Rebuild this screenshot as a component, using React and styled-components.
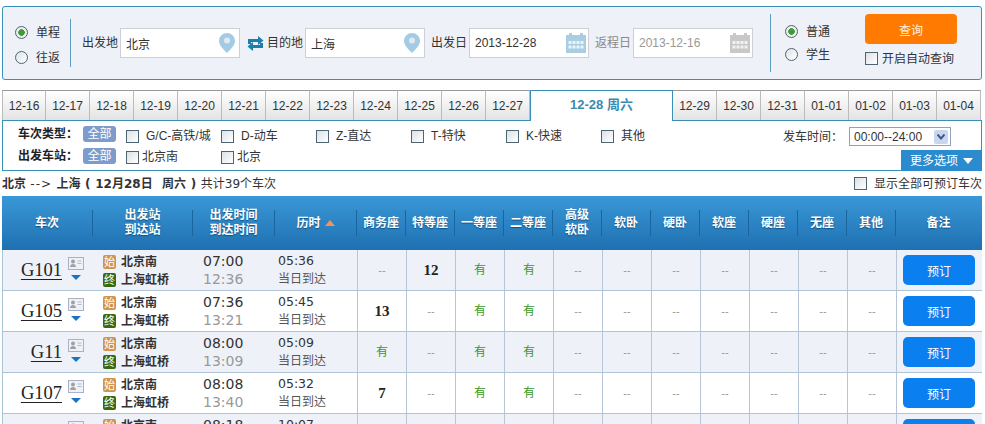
import React from "react";
import styled, { createGlobalStyle } from "styled-components";

const SANS = '"Liberation Sans", "Noto Sans CJK SC", sans-serif';
const COLS = "91px 100px 82px 82px repeat(11, 49px) 86px";

const GlobalStyle = createGlobalStyle`
  html, body {
    margin: 0;
    height: 424px;
    overflow: hidden;
    background: #fff;
  }
  body {
    font: 12px/16px ${SANS};
    color: #333;
  }
`;

const Page = styled.div`
  width: 980px;
  margin-left: 2px;
  padding-top: 6px;
`;

//Search panel
const SearchPanel = styled.form`
  display: flex;
  align-items: center;
  box-sizing: border-box;
  height: 74px;
  margin: 0;
  border: 1px solid #3a8fb7;
  border-radius: 3px;
  background: #eef1f8;
`;

const TripRadios = styled.div`
  display: flex;
  flex-direction: column;
  justify-content: center;
  gap: 9px;
  box-sizing: border-box;
  width: 68px;
  height: 48px;
  padding: 4px 0 0 12px;
  border-right: 1px solid #5b9fc0;
`;

const ClassRadios = styled.div`
  display: flex;
  flex-direction: column;
  justify-content: center;
  gap: 7px;
  box-sizing: border-box;
  width: 95px;
  height: 58px;
  margin-left: 17px;
  padding-left: 14px;
  border-left: 1px solid #5b9fc0;
`;

const RadioLabel = styled.label`
  display: flex;
  align-items: center;
  gap: 8px;
  height: 16px;
`;

const Radio = styled.input.attrs({ type: "radio" })`
  appearance: none;
  box-sizing: border-box;
  width: 13px;
  height: 13px;
  margin: 0;
  border: 1px solid #4d6473;
  border-radius: 50%;
  background: linear-gradient(135deg, #dfe3e8, #fff);
  &:checked {
    background: radial-gradient(circle, #3f9a3a 0 3px, #e8f0e8 3.5px);
  }
`;

const Fields = styled.div`
  display: flex;
  align-items: center;
  gap: 6px;
  margin-left: 11px;
`;

const FieldLabel = styled.label`
  display: flex;
  align-items: center;
  color: ${(p) => (p.$muted ? "#888" : "#333")};
`;

const LabelText = styled.span`
  width: 38px;
  white-space: nowrap;
`;

const InputBox = styled.span`
  position: relative;
  display: block;
  width: 120px;
  height: 30px;
`;

const TextInput = styled.input`
  display: block;
  box-sizing: border-box;
  width: 100%;
  height: 100%;
  padding: 0 5px;
  border: 1px solid #ccd0d6;
  outline: 0;
  background: #fff;
  font: 12px ${SANS};
  color: ${(p) => (p.$muted ? "#999" : "#333")};
`;

const FieldIcon = styled.span`
  position: absolute;
  top: 5px;
  right: ${(p) => p.$right}px;
  line-height: 0;
`;

const SwapIcon = styled.svg`
  display: block;
  flex: none;
  margin: 1px -3px 0 1px;
`;

const SearchColumn = styled.div`
  display: flex;
  flex-direction: column;
  align-self: flex-start;
  gap: 8px;
  margin: 7px 0 0 0;
`;

const SearchButton = styled.button`
  width: 92px;
  height: 30px;
  padding: 0;
  border: 0;
  border-radius: 4px;
  background: #ff7a00;
  font: 12px ${SANS};
  color: #fff3dd;
`;

const CheckLabel = styled.label`
  display: flex;
  align-items: center;
  gap: ${(p) => p.$gap || 4}px;
  height: 13px;
  white-space: nowrap;
  color: #333;
`;

const Check = styled.input.attrs({ type: "checkbox" })`
  appearance: none;
  flex: none;
  box-sizing: border-box;
  width: 13px;
  height: 13px;
  margin: 0;
  border: 1px solid #4d6473;
  background: linear-gradient(135deg, #dce1e6, #fff);
`;

//Date tabs
const Tabs = styled.div`
  display: flex;
  height: 30px;
  margin-top: 10px;
`;

const Tab = styled.div`
  display: flex;
  align-items: center;
  justify-content: center;
  flex: none;
  box-sizing: border-box;
  width: 44px;
  border-top: 1px solid #999;
  border-right: 1px solid #bbb;
  background: linear-gradient(#fff, #e3e3e3);
  font-size: 12px;
  &:first-child {
    border-left: 1px solid #bbb;
  }
`;

const ActiveTab = styled.div`
  position: relative;
  z-index: 1;
  display: flex;
  align-items: center;
  justify-content: center;
  flex: none;
  box-sizing: border-box;
  width: 143px;
  height: 31px;
  padding-bottom: 2px;
  border: 1px solid #3a8fb7;
  border-bottom: 0;
  background: #fff;
  font-size: 13px;
  font-weight: bold;
  color: #3a8ab0;
`;

//Filters
const FilterPanel = styled.div`
  display: flex;
  justify-content: space-between;
  box-sizing: border-box;
  height: 51px;
  border: 1px solid #3a8fb7;
`;

const FilterRows = styled.div`
  display: flex;
  flex-direction: column;
  gap: 6px;
  padding: 5px 0 0 15px;
`;

const FilterRow = styled.div`
  display: flex;
  align-items: center;
  height: 16px;
`;

const FilterTitle = styled.b`
  width: 65px;
  white-space: nowrap;
  color: #222;
`;

const AllBadge = styled.span`
  width: 33px;
  height: 16px;
  margin-right: 10px;
  border-radius: 3px;
  background: #7d9ccb;
  line-height: 16px;
  text-align: center;
  color: #fff;
`;

const FilterOption = styled(CheckLabel)`
  width: 95px;
  margin-top: ${(p) => p.$drop}px;
`;

const FilterSide = styled.div`
  display: flex;
  flex-direction: column;
  align-items: flex-end;
  justify-content: space-between;
  padding-top: 6px;
`;

const TimeRow = styled.div`
  display: flex;
  align-items: center;
  gap: 6px;
  margin-right: 30px;
`;

const TimeSelect = styled.div`
  display: flex;
  align-items: center;
  justify-content: space-between;
  box-sizing: border-box;
  width: 102px;
  height: 19px;
  padding: 0 2px 0 4px;
  border: 1px solid #8fa3b8;
  background: #fff;
  color: #333;
`;

const SelectArrow = styled.span`
  display: flex;
  align-items: center;
  justify-content: center;
  width: 14px;
  height: 14px;
  border-radius: 2px;
  background: #c9d7ee;
`;

const MoreButton = styled.div`
  display: flex;
  align-items: center;
  justify-content: center;
  gap: 5px;
  width: 81px;
  height: 21px;
  margin: 0 -1px -1px 0;
  background: #2a8bcf;
  color: #fff;
`;

const MoreCaret = styled.i`
  width: 0;
  height: 0;
  border: 5px solid transparent;
  border-top: 6px solid #fff;
  border-bottom: 0;
`;

const ResultInfo = styled.div`
  display: flex;
  align-items: center;
  justify-content: space-between;
  box-sizing: border-box;
  height: 25px;
  color: #333;
`;

const RouteText = styled.span`
  font-family: "DejaVu Sans", "Noto Sans CJK SC", sans-serif;
  white-space: pre;
  word-spacing: 0.5px;
`;

const RouteArrow = styled.span`
  letter-spacing: 1px;
`;

const ShowAll = styled(CheckLabel)`
  gap: 7px;
`;

//Table
const HeaderRow = styled.div`
  display: grid;
  grid-template-columns: ${COLS};
  align-items: center;
  height: 54px;
  background: linear-gradient(#3a98d8, #1f70b0);
`;

const HeadCell = styled.div`
  display: flex;
  align-items: center;
  justify-content: center;
  gap: 4px;
  height: 26px;
  border-right: 1px solid ${(p) => (p.$last ? "transparent" : "#1a659e")};
  font-weight: bold;
  line-height: 15px;
  text-align: center;
  color: #fff;
  text-shadow: 0 1px 1px #14507f;
`;

const HeadLabel = styled.span`
  white-space: pre-line;
`;

const SortArrow = styled.i`
  width: 0;
  height: 0;
  border: 5px solid transparent;
  border-bottom: 6px solid #f0935a;
  border-top: 0;
`;

const Rows = styled.div`
  border-left: 1px solid #a8c4d8;
`;

const Row = styled.div`
  display: grid;
  grid-template-columns: 90px 100px 82px 82px repeat(11, 49px) 86px;
  box-sizing: border-box;
  height: 41px;
  border-bottom: 1px solid #b0c4d8;
  background: ${(p) => (p.$odd ? "#eef1f8" : "#fff")};
`;

const Cell = styled.div`
  display: flex;
  align-items: center;
  justify-content: center;
  border-left: 1px solid #b6c6d6;
`;

const BookCell = styled(Cell)`
  padding-right: 1px;
`;

const TrainCell = styled.div`
  display: flex;
  align-items: center;
  gap: 6px;
`;

const TrainName = styled.a`
  box-sizing: border-box;
  width: 59px;
  font: 18.5px/20px "Liberation Serif", serif;
  text-align: right;
  text-decoration: underline;
  text-underline-offset: 3px;
  color: #222;
`;

const TrainIcons = styled.div`
  display: flex;
  flex-direction: column;
  align-items: center;
  gap: 5px;
  margin-top: -4px;
`;

const TrainCaret = styled.i`
  width: 0;
  height: 0;
  border: 5px solid transparent;
  border-top: 5px solid #1a72c4;
  border-bottom: 0;
`;

const StackCell = styled.div`
  display: flex;
  flex-direction: column;
  justify-content: center;
  gap: 2px;
  padding: ${(p) => p.$top || 0}px 0 0 ${(p) => p.$pad}px;
`;

const Station = styled.div`
  display: flex;
  align-items: center;
  gap: 5px;
  height: 16px;
  font-weight: bold;
  color: #333;
`;

const StationBadge = styled.span`
  width: 13px;
  height: 14px;
  border-radius: 2px;
  background: ${(p) => (p.$end ? "#3a6a10" : "#cf9550")};
  font-size: 11px;
  font-weight: normal;
  line-height: 14px;
  text-align: center;
  color: #fff;
`;

const TimeText = styled.div`
  height: 16px;
  font: 14px/16px "DejaVu Sans", sans-serif;
  color: ${(p) => (p.$grey ? "#999" : "#333")};
`;

const DurationText = styled.div`
  height: 16px;
  font: 12.5px/16px "DejaVu Sans", sans-serif;
  color: #333;
`;

const ArriveText = styled.div`
  height: 16px;
  line-height: 16px;
  color: #555;
`;

const SeatValue = styled.span`
  color: #999;
  font-size: 11px;
`;

const SeatYes = styled.span`
  color: #3a9a1a;
`;

const SeatCount = styled.span`
  font: bold 15px "Liberation Serif", serif;
  color: #222;
`;

const BookButton = styled.button`
  width: 72px;
  height: 30px;
  padding: 0;
  border: 0;
  border-radius: 5px;
  background: #0a7ff0;
  font: 12px ${SANS};
  color: #fff;
`;

const PinIcon = () => (
  <svg width="16" height="20" viewBox="0 0 16 20">
    <path
      d="M8 0a8 8 0 0 1 8 8c0 4.500-5 9-8 12-3-3-8-7.500-8-12a8 8 0 0 1 8-8z"
      fill="#a3cbe3"
    />
    <circle cx="8" cy="7.500" r="3" fill="#dfeaf2" />
  </svg>
);

const CalendarIcon = ({ color }) => (
  <svg width="20" height="20" viewBox="0 0 20 20">
    <rect y="2" width="20" height="18" fill={color} />
    <rect x="3" y="0" width="3" height="5" fill={color} />
    <rect x="14" y="0" width="3" height="5" fill={color} />
    <g fill="#fff" fillOpacity="0.75">
      {[8, 12.5].map((y) =>
        [2.5, 6.5, 10.5, 14.5].map((x) => (
          <rect key={`${x}-${y}`} x={x} y={y} width="3" height="3" />
        ))
      )}
    </g>
  </svg>
);

const CardIcon = () => (
  <svg width="16" height="13" viewBox="0 0 16 13">
    <rect x="0.500" y="0.500" width="15" height="12" fill="#eef2f8" stroke="#a8b2c2" />
    <circle cx="5" cy="4.500" r="2" fill="#a0a0a0" />
    <path d="M2 10c0-2 1.500-3 3-3s3 1 3 3z" fill="#a0a0a0" />
    <path d="M9.500 4h4M9.500 6.500h4" stroke="#b4bcc8" />
  </svg>
);

const dates1 = ["12-16", "12-17", "12-18", "12-19", "12-20", "12-21", "12-22", "12-23", "12-24", "12-25", "12-26", "12-27"];
const dates2 = ["12-29", "12-30", "12-31", "01-01", "01-02", "01-03", "01-04"];
const types = ["G/C-高铁/城", "D-动车", "Z-直达", "T-特快", "K-快速", "其他"];
const heads = ["商务座", "特等座", "一等座", "二等座", "高级\n软卧", "软卧", "硬卧", "软座", "硬座", "无座", "其他"];

const trains = [
  { no: "G101", dep: "07:00", arr: "12:36", dur: "05:36", seats: { 1: "12", 2: "有", 3: "有" } },
  { no: "G105", dep: "07:36", arr: "13:21", dur: "05:45", seats: { 0: "13", 2: "有", 3: "有" } },
  { no: "G11", dep: "08:00", arr: "13:09", dur: "05:09", seats: { 0: "有", 2: "有", 3: "有" } },
  { no: "G107", dep: "08:08", arr: "13:40", dur: "05:32", seats: { 0: "7", 2: "有", 3: "有" } },
  { no: "G41", dep: "08:18", arr: "13:25", dur: "10:07", seats: { 2: "有", 3: "有" } },
];

const Seat = ({ value }) => {
  if (!value) return <SeatValue>--</SeatValue>;
  if (value === "有") return <SeatYes>有</SeatYes>;
  return <SeatCount>{value}</SeatCount>;
};

const App = () => {
  return (
    <Page>
      <GlobalStyle />
      <SearchPanel>
        <TripRadios>
          <RadioLabel>
            <Radio name="trip" defaultChecked />
            单程
          </RadioLabel>
          <RadioLabel>
            <Radio name="trip" />
            往返
          </RadioLabel>
        </TripRadios>
        <Fields>
          <FieldLabel>
            <LabelText>出发地</LabelText>
            <InputBox>
              <TextInput defaultValue="北京" />
              <FieldIcon $right={5}>
                <PinIcon />
              </FieldIcon>
            </InputBox>
          </FieldLabel>
          <SwapIcon width="17" height="15" viewBox="0 0 17 15">
            <path
              d="M1 8V3h10V0l5.500 4.500L11 9V6H4v2zM16 7v5H6v3L0.500 10.500 6 6v3h7V7z"
              fill="#1d7ea8"
            />
          </SwapIcon>
          <FieldLabel>
            <LabelText>目的地</LabelText>
            <InputBox>
              <TextInput defaultValue="上海" />
              <FieldIcon $right={5}>
                <PinIcon />
              </FieldIcon>
            </InputBox>
          </FieldLabel>
          <FieldLabel>
            <LabelText>出发日</LabelText>
            <InputBox>
              <TextInput defaultValue="2013-12-28" />
              <FieldIcon $right={3}>
                <CalendarIcon color="#a9cde3" />
              </FieldIcon>
            </InputBox>
          </FieldLabel>
          <FieldLabel $muted>
            <LabelText>返程日</LabelText>
            <InputBox>
              <TextInput $muted defaultValue="2013-12-16" />
              <FieldIcon $right={3}>
                <CalendarIcon color="#c8c8c8" />
              </FieldIcon>
            </InputBox>
          </FieldLabel>
        </Fields>
        <ClassRadios>
          <RadioLabel>
            <Radio name="kind" defaultChecked />
            普通
          </RadioLabel>
          <RadioLabel>
            <Radio name="kind" />
            学生
          </RadioLabel>
        </ClassRadios>
        <SearchColumn>
          <SearchButton type="button">查询</SearchButton>
          <CheckLabel>
            <Check />
            开启自动查询
          </CheckLabel>
        </SearchColumn>
      </SearchPanel>

      <Tabs>
        {dates1.map((d) => (
          <Tab key={d}>{d}</Tab>
        ))}
        <ActiveTab>12-28 周六</ActiveTab>
        {dates2.map((d) => (
          <Tab key={d}>{d}</Tab>
        ))}
      </Tabs>

      <FilterPanel>
        <FilterRows>
          <FilterRow>
            <FilterTitle>车次类型：</FilterTitle>
            <AllBadge>全部</AllBadge>
            {types.map((label) => (
              <FilterOption key={label} $gap={7} $drop={4}>
                <Check />
                {label}
              </FilterOption>
            ))}
          </FilterRow>
          <FilterRow>
            <FilterTitle>出发车站：</FilterTitle>
            <AllBadge>全部</AllBadge>
            <FilterOption $gap={3} $drop={2}>
              <Check />
              北京南
            </FilterOption>
            <FilterOption $gap={3} $drop={2}>
              <Check />
              北京
            </FilterOption>
          </FilterRow>
        </FilterRows>
        <FilterSide>
          <TimeRow>
            发车时间：
            <TimeSelect>
              00:00--24:00
              <SelectArrow>
                <svg width="8" height="6" viewBox="0 0 8 6">
                  <path d="M0.500 0.500L4 4.500L7.500 0.500" fill="none" stroke="#3d5a8a" strokeWidth="2" />
                </svg>
              </SelectArrow>
            </TimeSelect>
          </TimeRow>
          <MoreButton>
            更多选项
            <MoreCaret />
          </MoreButton>
        </FilterSide>
      </FilterPanel>

      <ResultInfo>
        <RouteText>
          <b>北京</b> <RouteArrow>--&gt;</RouteArrow> <b>上海 ( 12月28日  周六 ) </b>共计39个车次
        </RouteText>
        <ShowAll>
          <Check />
          显示全部可预订车次
        </ShowAll>
      </ResultInfo>

      <HeaderRow>
        <HeadCell>车次</HeadCell>
        <HeadCell>
          出发站
          <br />
          到达站
        </HeadCell>
        <HeadCell>
          出发时间
          <br />
          到达时间
        </HeadCell>
        <HeadCell>
          历时
          <SortArrow />
        </HeadCell>
        {heads.map((h) => (
          <HeadCell key={h}>
            <HeadLabel>{h}</HeadLabel>
          </HeadCell>
        ))}
        <HeadCell $last>备注</HeadCell>
      </HeaderRow>

      <Rows>
        {trains.map((t, i) => (
          <Row key={t.no} $odd={i % 2 === 0}>
            <TrainCell>
              <TrainName>{t.no}</TrainName>
              <TrainIcons>
                <CardIcon />
                <TrainCaret />
              </TrainIcons>
            </TrainCell>
            <StackCell $pad={10} $top={2}>
              <Station>
                <StationBadge>始</StationBadge>
                北京南
              </Station>
              <Station>
                <StationBadge $end>终</StationBadge>
                上海虹桥
              </Station>
            </StackCell>
            <StackCell $pad={10}>
              <TimeText>{t.dep}</TimeText>
              <TimeText $grey>{t.arr}</TimeText>
            </StackCell>
            <StackCell $pad={3}>
              <DurationText>{t.dur}</DurationText>
              <ArriveText>当日到达</ArriveText>
            </StackCell>
            {heads.map((h, s) => (
              <Cell key={h}>
                <Seat value={t.seats[s]} />
              </Cell>
            ))}
            <BookCell>
              <BookButton type="button">预订</BookButton>
            </BookCell>
          </Row>
        ))}
      </Rows>
    </Page>
  );
};

export default App;
